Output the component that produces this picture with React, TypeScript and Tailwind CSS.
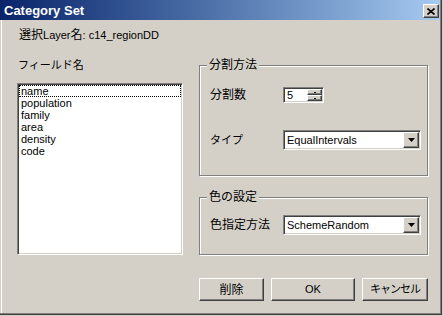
import React from "react";

const ui = "font-['Liberation_Sans','Noto_Sans_CJK_JP',sans-serif] text-black";
const raised =
  "border border-t-white border-l-white border-r-[#404040] border-b-[#404040] shadow-[inset_-1px_-1px_0_#808080] bg-[#d4d0c8]";
const sunken =
  "border border-t-[#808080] border-l-[#808080] border-r-white border-b-white shadow-[inset_1px_1px_0_#404040,inset_-1px_-1px_0_#d4d0c8]";
const etched = "border border-[#808080] shadow-[inset_1px_1px_0_#fff,1px_1px_0_#fff]";

const DownArrow = () => (
  <svg width="7" height="4" viewBox="0 0 7 4">
    <path d="M0 0h7L3.5 4z" fill="#000" />
  </svg>
);

const Combo = ({ value }: { value: string }) => (
  <div className={`flex w-[138px] h-[20px] bg-white p-[1px] ${sunken}`}>
    <div className="flex-1 pl-[2px] text-[11px] leading-[16px]">{value}</div>
    <div className={`w-[16px] h-[16px] flex items-center justify-center ${raised}`}>
      <DownArrow />
    </div>
  </div>
);

const Spin = ({ value }: { value: string }) => (
  <div className={`flex w-[41px] h-[16px] bg-white p-[1px] ${sunken}`}>
    <div className="flex-1 pl-[2px] text-[11px] leading-[12px]">{value}</div>
    <div className="flex flex-col w-[15px]">
      <div className={`h-[6px] flex items-center justify-center ${raised}`}>
        <div className="w-[2px] h-[1px] bg-black" />
      </div>
      <div className={`h-[6px] flex items-center justify-center ${raised}`}>
        <div className="w-[2px] h-[1px] bg-black" />
      </div>
    </div>
  </div>
);

const Group = ({
  title,
  height,
  className,
  children,
}: {
  title: string;
  height: string;
  className?: string;
  children?: React.ReactNode;
}) => (
  <fieldset className={`w-[229px] p-0 m-0 ${height} ${etched} ${className ?? ""}`}>
    <legend className="ml-[7px] px-[2px] bg-[#d4d0c8] text-[12px] leading-[14px]">{title}</legend>
    <div className="pl-[10px]">{children}</div>
  </fieldset>
);

const Button = ({ label, className }: { label: string; className: string }) => (
  <div className={`h-[23px] flex items-center justify-center ${raised} ${className}`}>{label}</div>
);

const fields = ["population", "family", "area", "density", "code"];

export default function App() {
  return (
    <div className={`w-[443px] h-[316px] bg-[#d4d0c8] pr-[1px] pb-[1px] ${ui}`}>
      <div className="w-full h-full border-r border-b border-[#404040]">
        <div className="w-full h-full flex flex-col border-r border-b border-[#808080]">
          <div className="h-[20px] flex items-start bg-gradient-to-r from-[#0a246a] to-[#a6caf0]">
            <div className="flex-1 pl-[4px] pt-[3px] text-[13px] leading-[15px] font-bold text-white">
              Category Set
            </div>
            <div className={`w-[16px] h-[14px] mt-[4px] mr-[1px] flex items-center justify-center ${raised}`}>
              <svg width="8" height="7" viewBox="0 0 8 7">
                <path d="M0.5 0.5L7.5 6.5M7.5 0.5L0.5 6.5" stroke="#000" strokeWidth="1.6" />
              </svg>
            </div>
          </div>
          <div className="flex-1 ml-[1px] border-l border-white pl-[15px]">
            <div className="mt-[8px] pl-[2px] h-[14px] leading-[14px] text-[12px]">
              選択<span className="text-[11px]">Layer</span>名<span className="text-[11px]">: c14_regionDD</span>
            </div>
            <div className="flex mt-[16px]">
              <div className="w-[166px]">
                <div className="pl-[1px] h-[14px] leading-[14px] text-[11px]">フィールド名</div>
                <div className={`mt-[11px] w-[166px] h-[172px] bg-white p-[1px] ${sunken}`}>
                  <div className="h-[12px] leading-[10px] text-[11px] border border-dotted border-black pl-[1px]">
                    name
                  </div>
                  {fields.map((f) => (
                    <div key={f} className="h-[12px] leading-[12px] text-[11px] pl-[2px]">
                      {f}
                    </div>
                  ))}
                </div>
              </div>
              <div className="ml-[16px] w-[230px] flex flex-col">
                <Group title="分割方法" height="h-[118px]">
                  <div className="mt-[15px] flex items-center h-[16px]">
                    <div className="w-[73px] text-[12px]">分割数</div>
                    <Spin value="5" />
                  </div>
                  <div className="mt-[27px] flex items-center h-[20px]">
                    <div className="w-[73px] text-[11px]">タイプ</div>
                    <Combo value="EqualIntervals" />
                  </div>
                </Group>
                <Group title="色の設定" height="h-[65px]" className="mt-[14px]">
                  <div className="mt-[11px] flex items-center h-[20px]">
                    <div className="w-[73px] text-[12px]">色指定方法</div>
                    <Combo value="SchemeRandom" />
                  </div>
                </Group>
                <div className="mt-[23px] flex gap-[7px]">
                  <Button label="削除" className="w-[65px] text-[12px]" />
                  <Button label="OK" className="w-[84px] text-[11px]" />
                  <Button label="キャンセル" className="w-[66px] text-[11px] tracking-[-1px]" />
                </div>
              </div>
            </div>
          </div>
        </div>
      </div>
    </div>
  );
}
